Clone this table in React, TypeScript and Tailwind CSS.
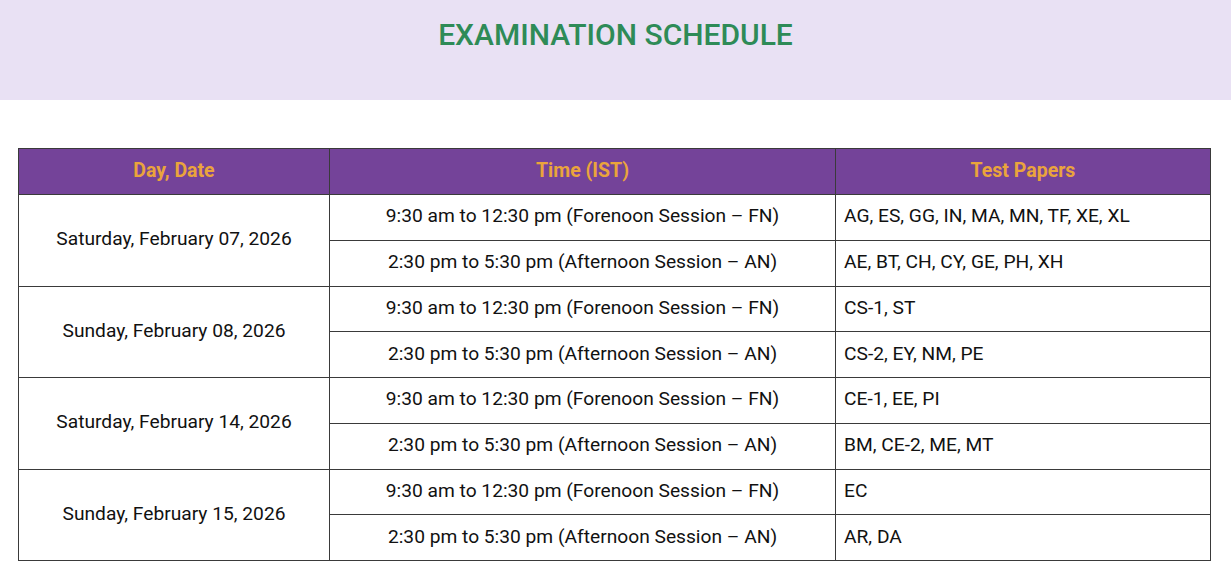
import React from "react";

const days = [
  {
    date: "Saturday, February 07, 2026",
    rows: [
      ["9:30 am to 12:30 pm (Forenoon Session – FN)", "AG, ES, GG, IN, MA, MN, TF, XE, XL"],
      ["2:30 pm to 5:30 pm (Afternoon Session – AN)", "AE, BT, CH, CY, GE, PH, XH"],
    ],
  },
  {
    date: "Sunday, February 08, 2026",
    rows: [
      ["9:30 am to 12:30 pm (Forenoon Session – FN)", "CS-1, ST"],
      ["2:30 pm to 5:30 pm (Afternoon Session – AN)", "CS-2, EY, NM, PE"],
    ],
  },
  {
    date: "Saturday, February 14, 2026",
    rows: [
      ["9:30 am to 12:30 pm (Forenoon Session – FN)", "CE-1, EE, PI"],
      ["2:30 pm to 5:30 pm (Afternoon Session – AN)", "BM, CE-2, ME, MT"],
    ],
  },
  {
    date: "Sunday, February 15, 2026",
    rows: [
      ["9:30 am to 12:30 pm (Forenoon Session – FN)", "EC"],
      ["2:30 pm to 5:30 pm (Afternoon Session – AN)", "AR, DA"],
    ],
  },
];

export default function App() {
  return (
    <div className="min-h-screen bg-white font-['Roboto',sans-serif]">
      <div className="h-[100px] bg-[#e9e1f4] pt-[16px] text-center">
        <h1 className="text-[30px] font-medium leading-[38px] text-[#2e8b57]">EXAMINATION SCHEDULE</h1>
      </div>
      <div className="pl-[18px] pt-[48px]">
        <table className="w-[1193px] table-fixed border-collapse text-[19.2px] leading-[24px] text-[#111]">
          <colgroup>
            <col className="w-[311px]" />
            <col className="w-[506px]" />
            <col />
          </colgroup>
          <thead>
            <tr className="h-[46px] bg-[#744399]">
              <th className="border border-[#3a3a3a] pb-[2px] text-[19.5px] font-bold text-[#eaa43c]">Day, Date</th>
              <th className="border border-[#3a3a3a] pb-[2px] text-[19.5px] font-bold text-[#eaa43c]">Time (IST)</th>
              <th className="border border-[#3a3a3a] pb-[2px] text-[19.5px] font-bold text-[#eaa43c]">Test Papers</th>
            </tr>
          </thead>
          <tbody>
            {days.map((d) =>
              d.rows.map((r, i) => (
                <tr key={d.date + i} className="h-[45.75px]">
                  {i === 0 && (
                    <td rowSpan={2} className="border border-[#3a3a3a] pb-[2px] text-center">
                      {d.date}
                    </td>
                  )}
                  <td className="border border-[#3a3a3a] pb-[2px] text-center">{r[0]}</td>
                  <td className="border border-[#3a3a3a] px-[8px] pb-[2px]">{r[1]}</td>
                </tr>
              ))
            )}
          </tbody>
        </table>
      </div>
    </div>
  );
}
